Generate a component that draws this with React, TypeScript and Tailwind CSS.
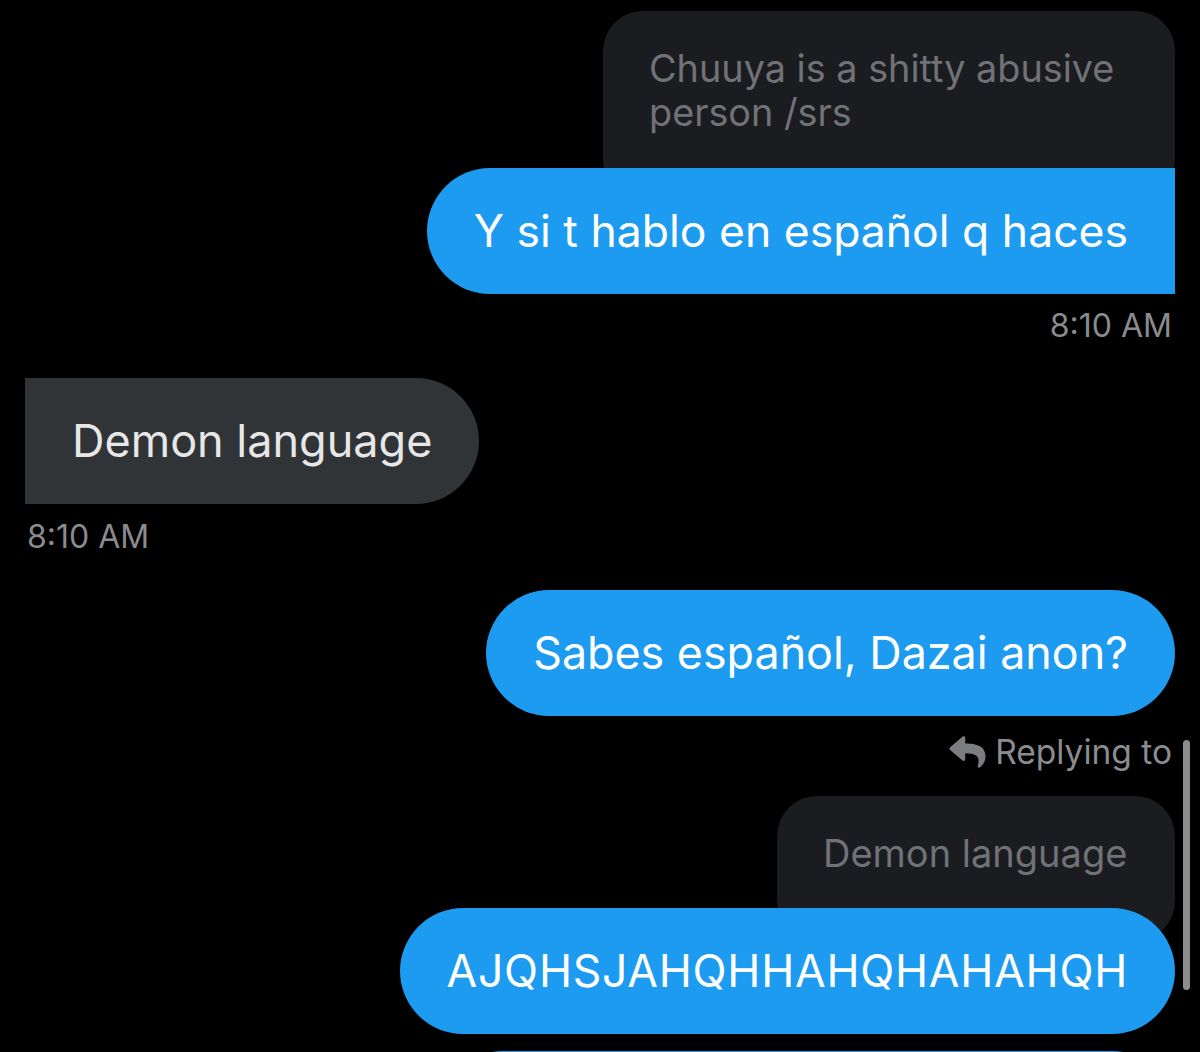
import { FaReply } from 'react-icons/fa';

export default function App() {
    return (
        <div className="relative h-[1052px] w-[1200px] overflow-hidden bg-black font-['Inter',sans-serif]">
            <div className="flex flex-col px-[25px] pt-[11px]">
                {/* quoted message */}
                <div className="self-end w-[572px] rounded-[40px] bg-[#1b1c1f] pl-[46px] pr-[40px] pt-[35px] pb-[66px] text-[37.8px] leading-[44px] text-[#6f7276]">
                    Chuuya is a shitty abusive person /srs
                </div>

                <div className="self-end -mt-[32px] rounded-l-full rounded-tr-[32px] rounded-br-[6px] bg-[#1d9bf0] px-[47px] py-[35px] text-[44.5px] leading-[56px] text-white">
                    Y si t hablo en español q haces
                </div>
                <div className="self-end mt-[13px] pr-[3px] text-[32px] leading-[38px] text-[#8a8b8f]">8:10 AM</div>

                {/* received */}
                <div className="self-start mt-[33px] rounded-r-full rounded-tl-[38px] rounded-bl-[6px] bg-[#313437] px-[47px] py-[35px] text-[45px] leading-[56px] text-[#e7e7e8]">
                    Demon language
                </div>
                <div className="self-start mt-[14px] pl-[2px] text-[32px] leading-[38px] text-[#8a8b8f]">8:10 AM</div>

                <div className="self-end mt-[34px] rounded-full bg-[#1d9bf0] px-[47px] py-[35px] text-[44.8px] leading-[56px] text-white">
                    Sabes español, Dazai anon?
                </div>

                {/* reply header */}
                <div className="self-end mt-[17px] flex items-center gap-[9px] pr-[3px] text-[33.5px] leading-[38px] text-[#8a8c90]">
                    <FaReply className="h-[36px] w-[37px] text-[#7b7d81]" />
                    <span>Replying to</span>
                </div>

                <div className="self-end mt-[25px] w-[398px] rounded-[40px] bg-[#1b1c1f] pl-[46px] pr-[30px] pt-[35px] pb-[66px] text-[38px] leading-[44px] text-[#6f7276]">
                    Demon language
                </div>
                <div className="self-end -mt-[33px] rounded-full bg-[#1d9bf0] px-[47px] py-[35px] text-[44.5px] leading-[56px] tracking-[0.75px] text-white">
                    AJQHSJAHQHHAHQHAHAHQH
                </div>

                <div className="self-end mt-[17px] h-[126px] w-[735px] rounded-full bg-[#1d9bf0]" />
            </div>

            {/* scroll indicator */}
            <div className="absolute right-[10px] top-[740px] h-[250px] w-[7px] rounded-full bg-[#8d8d8d]" />
        </div>
    );
}
